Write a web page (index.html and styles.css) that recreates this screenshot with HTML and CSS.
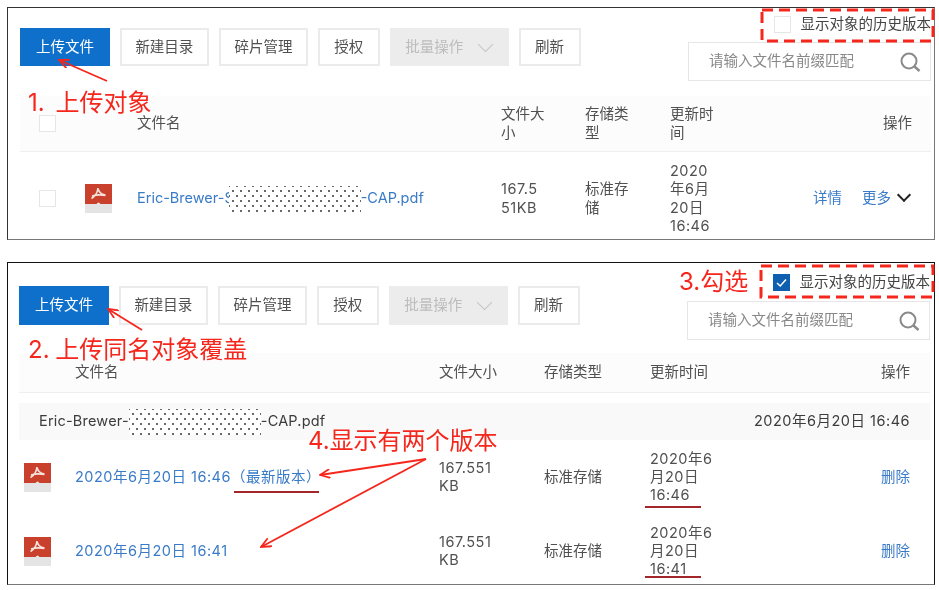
FILE: index.html
```html
<!DOCTYPE html>
<html lang="zh-CN">
<head>
  <meta charset="UTF-8" />
  <title>显示对象的历史版本</title>
  <link rel="stylesheet" href="styles.css">
</head>
<body>
  <svg width="0" height="0" class="defs">
    <symbol id="pdf" viewBox="0 0 27 29">
      <rect width="27" height="20" fill="#c9412c"/>
      <rect y="20" width="27" height="9" fill="#e4e4e4"/>
      <path d="M13.5 18.5l2 1.5h-4z" fill="#fff"/>
      <path d="M13 4c-.3 4-2.500 8-6.500 10.500M13 4c.5 4 3 6.500 7.500 7M7 12c4-1.200 8.500-1.500 13.500-.5" fill="none" stroke="#f6e2dc" stroke-width="1.700"/>
    </symbol>
    <symbol id="search" viewBox="0 0 21 20">
      <circle cx="9" cy="9" r="7.500" fill="none" stroke="#8a8a8a" stroke-width="2"/>
      <path d="M14.500 14.500l5 4.500" stroke="#8a8a8a" stroke-width="2.400"/>
    </symbol>
  </svg>

  <div class="page">
    <section class="panel panel-one">
      <div class="top">
        <div class="toolbar">
          <button class="btn btn-primary">上传文件</button>
          <button class="btn">新建目录</button>
          <button class="btn">碎片管理</button>
          <button class="btn btn-short">授权</button>
          <button class="btn btn-disabled">批量操作 <span class="chevron"></span></button>
          <button class="btn btn-short">刷新</button>
        </div>
        <div class="side">
          <label class="history"><span class="check"></span>显示对象的历史版本</label>
          <div class="search"><span>请输入文件名前缀匹配</span><svg width="21" height="20"><use href="#search"/></svg></div>
        </div>
      </div>
      <div class="row head">
        <div><span class="check"></span></div>
        <div></div>
        <div>文件名</div>
        <div class="narrow">文件大小</div>
        <div class="narrow">存储类型</div>
        <div class="narrow">更新时间</div>
        <div class="ops">操作</div>
      </div>
      <div class="row body-row">
        <div><span class="check"></span></div>
        <div><svg class="pdf" width="27" height="29"><use href="#pdf"/></svg></div>
        <div class="link">Eric-Brewer-S<span class="mask"></span>-CAP.pdf</div>
        <div class="narrow size num">167.551KB</div>
        <div class="narrow">标准存储</div>
        <div class="narrow num">2020年6月20日 16:46</div>
        <div class="ops"><span class="link">详情</span><span class="link">更多</span><span class="chevron dark"></span></div>
      </div>
    </section>

    <section class="panel panel-two">
      <div class="top">
        <div class="toolbar">
          <button class="btn btn-primary">上传文件</button>
          <button class="btn">新建目录</button>
          <button class="btn">碎片管理</button>
          <button class="btn btn-short">授权</button>
          <button class="btn btn-disabled">批量操作 <span class="chevron"></span></button>
          <button class="btn btn-short">刷新</button>
        </div>
        <div class="side">
          <label class="history"><span class="check checked"><svg width="17" height="17"><path d="M4 9l3.200 3L13 5.500" fill="none" stroke="#fff" stroke-width="1.500"/></svg></span>显示对象的历史版本</label>
          <div class="search"><span>请输入文件名前缀匹配</span><svg width="21" height="20"><use href="#search"/></svg></div>
        </div>
      </div>
      <div class="row head">
        <div></div>
        <div>文件名</div>
        <div>文件大小</div>
        <div>存储类型</div>
        <div>更新时间</div>
        <div class="ops">操作</div>
      </div>
      <div class="group">
        <div class="group-name">Eric-Brewer-<span class="mask"></span>-CAP.pdf</div>
        <div class="num">2020年6月20日 16:46</div>
      </div>
      <div class="row body-row">
        <div><svg class="pdf" width="27" height="29"><use href="#pdf"/></svg></div>
        <div class="link num">2020年6月20日 16:46（最新版本）</div>
        <div class="size num">167.551KB</div>
        <div>标准存储</div>
        <div class="when num">2020年6月20日 16:46</div>
        <div class="ops"><span class="link">删除</span></div>
      </div>
      <div class="row body-row">
        <div><svg class="pdf" width="27" height="29"><use href="#pdf"/></svg></div>
        <div class="link num">2020年6月20日 16:41</div>
        <div class="size num">167.551KB</div>
        <div>标准存储</div>
        <div class="when num">2020年6月20日 16:41</div>
        <div class="ops"><span class="link">删除</span></div>
      </div>
    </section>

    <!-- red notes drawn on top of the two screenshots -->
    <svg class="marks" width="939" height="590">
      <defs>
        <marker id="tip" viewBox="0 0 12 10" refX="11" refY="5" markerWidth="12" markerHeight="10" markerUnits="userSpaceOnUse" orient="auto">
          <path d="M1 .5L11 5 1 9.500" fill="none" stroke="#f5261c" stroke-width="1.800"/>
        </marker>
      </defs>
      <g fill="none" stroke="#f5261c" stroke-width="1.800">
        <path d="M107 81L59 60" marker-end="url(#tip)"/>
        <path d="M142 330L108 309" marker-end="url(#tip)"/>
        <path d="M426 459L320 475" marker-end="url(#tip)"/>
        <path d="M426 459L261 547" marker-end="url(#tip)"/>
      </g>
      <g fill="none" stroke="#f5261c" stroke-width="3" stroke-dasharray="11 6">
        <rect x="762" y="10" width="171" height="31"/>
        <rect x="761" y="266" width="172" height="31"/>
      </g>
      <g stroke="#a3262a" stroke-width="2">
        <path d="M234 492H319"/>
        <path d="M645 507H701"/>
        <path d="M645 577H701"/>
      </g>
    </svg>
    <div class="note note-1">1. 上传对象</div>
    <div class="note note-2">2. 上传同名对象覆盖</div>
    <div class="note note-3">3.勾选</div>
    <div class="note note-4">4.显示有两个版本</div>
  </div>
</body>
</html>
```

FILE: styles.css
```css
* {
  box-sizing: border-box;
}

body {
  margin: 0;
  background: #fff;
  font-family: Inter, "Noto Sans CJK SC", sans-serif;
  font-size: 14.5px;
  line-height: 18.300px;
  color: #505050;
  overflow: hidden;
}

.defs {
  position: absolute;
}

/* the source is an upscaled capture, everything in it is a bit soft */
.page {
  position: relative;
  width: 939px;
  height: 590px;
  padding: 7px 4px 0 7px;
  filter: blur(.35px);
}

.panel {
  border: 1px solid #333;
  overflow: hidden;
  background: #fff;
}

.panel-one {
  height: 233px;
  padding: 0 3px 0 12px;
  border-right-color: #777;
  border-bottom-color: #777;
}

.panel-two {
  height: 323px;
  margin-top: 22px;
  padding: 0 4px 0 11px;
  border-color: #111;
  border-bottom-color: #777;
}

.top {
  display: flex;
  justify-content: space-between;
  align-items: flex-start;
  height: 88px;
}

.panel-two .top {
  height: 90px;
}

.toolbar {
  display: flex;
  gap: 9.700px;
  margin-top: 20px;
}

.panel-two .toolbar {
  margin-top: 23px;
}

.btn {
  height: 38px;
  padding: 0 13.700px;
  border: 2px solid #ebebeb;
  background: #fff;
  color: #505050;
  font: inherit;
  display: flex;
  align-items: center;
}

.panel-two .btn {
  height: 39px;
}

.btn-primary {
  padding: 0 14px;
  background: #0f70cc;
  border-color: #0f70cc;
  color: #fff;
}

.btn-short {
  padding: 0 14.500px;
}

.btn-disabled {
  gap: 15px;
  background: #ececec;
  border-color: #ececec;
  color: #bcbcbc;
}

.chevron {
  width: 11px;
  height: 11px;
  margin: -6px 2px 0;
  border-right: 1.500px solid #c4c4c4;
  border-bottom: 1.500px solid #c4c4c4;
  transform: rotate(45deg);
}

.chevron.dark {
  display: inline-block;
  width: 10px;
  height: 10px;
  margin: 0 3px 3px 8px;
  border-right: 2px solid #222;
  border-bottom: 2px solid #222;
}

.side {
  display: flex;
  flex-direction: column;
  align-items: flex-end;
}

.history {
  display: flex;
  align-items: center;
  gap: 10px;
  margin-top: 8px;
  height: 17px;
  color: #444;
}

.panel-two .history {
  margin-top: 11px;
}

.check {
  display: block;
  width: 17px;
  height: 17px;
  border: 1.500px solid #e6e6e6;
  background: #fff;
}

.check.checked {
  border: 0;
  background: #0f5fb0;
}

.check.checked svg {
  display: block;
}

.search {
  display: flex;
  justify-content: space-between;
  align-items: center;
  width: 243px;
  height: 39px;
  margin-top: 9px;
  padding: 0 9px 0 20px;
  border: 1.500px solid #e6e6e6;
  color: #888;
}

.panel-two .search {
  margin-top: 10px;
}

.row {
  display: grid;
  align-items: center;
}

.panel-one .row {
  grid-template-columns: 65px 52px 364px 84px 85px 50px 1fr;
}

.panel-two .row {
  grid-template-columns: 56px 364px 105px 106px 70px 1fr;
}

.head {
  background: #fcfcfc;
  border-bottom: 1.500px solid #efefef;
}

.panel-one .head {
  height: 56px;
}

.panel-two .head {
  height: 40px;
}

.body-row {
  height: 74px;
}

.panel-one .body-row {
  height: 93px;
}

.panel-one .row > :first-child {
  padding-left: 19px;
}

.panel-two .body-row > :first-child {
  padding-left: 5px;
}

.narrow {
  width: 46px;
}

.panel-one .narrow:nth-child(6) {
  width: 50px;
}

.num {
  letter-spacing: .5px;
}

.size {
  word-break: break-all;
}

.panel-one .size {
  width: 44px;
}

.panel-two .size {
  width: 60px;
}

.when {
  width: 72px;
}

.ops {
  padding-right: 20px;
  text-align: right;
}

.panel-one .ops {
  padding-right: 19px;
}

.ops .link + .link {
  margin-left: 20px;
}

.link {
  color: #3a7bc8;
}

.pdf {
  display: block;
}

.mask {
  display: inline-block;
  width: 132px;
  height: 26px;
  margin-left: -5px;
  vertical-align: middle;
  background-color: #fff;
  background-image: radial-gradient(circle, #333 .6px, transparent 1px), radial-gradient(circle, #333 .6px, transparent 1px);
  background-size: 8px 10px;
  background-position: 0 0, 4px 5px;
}

.group {
  display: flex;
  justify-content: space-between;
  align-items: center;
  height: 37px;
  margin-top: 10px;
  padding: 0 20px;
  background: #f9f9f9;
  color: #3c3c3c;
}

.group-name {
  letter-spacing: .2px;
}

.group-name .mask {
  margin-left: 0;
}

.marks {
  position: absolute;
  left: 0;
  top: 0;
}

.note {
  position: absolute;
  color: #f5261c;
  font-size: 24px;
  line-height: 30px;
  white-space: nowrap;
}

.note-1 { left: 28px; top: 88px; word-spacing: 4px; }
.note-2 { left: 28px; top: 335px; word-spacing: -1px; }
.note-3 { left: 679px; top: 267px; }
.note-4 { left: 308px; top: 426px; }
```
